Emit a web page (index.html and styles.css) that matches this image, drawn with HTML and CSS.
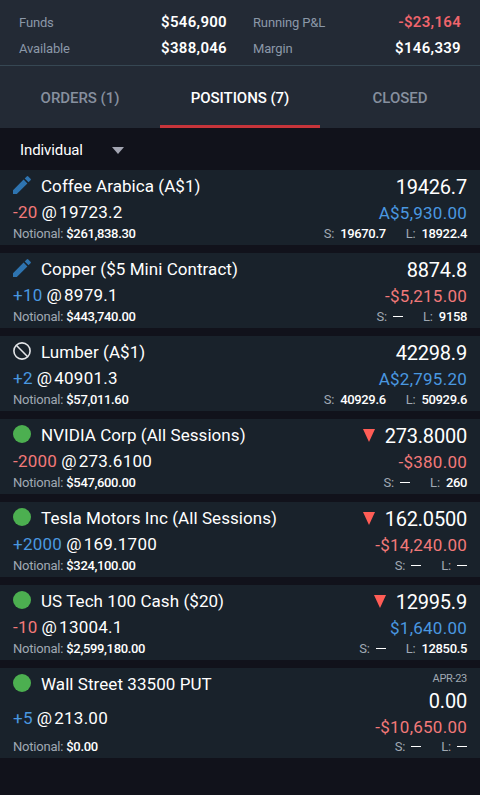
FILE: index.html
```html
<!DOCTYPE html>
<html lang="en">
<head>
    <meta charset="UTF-8">
    <meta name="viewport" content="width=device-width, initial-scale=1.0">
    <title>Positions</title>
    <link rel="stylesheet" href="styles.css">
</head>
<body>
    <!-- Account summary -->
    <header class="summary">
        <div class="summary-col">
            <div class="summary-row"><span>Funds</span><strong>$546,900</strong></div>
            <div class="summary-row"><span>Available</span><strong>$388,046</strong></div>
        </div>
        <div class="summary-col">
            <div class="summary-row"><span>Running P&amp;L</span><strong class="loss">-$23,164</strong></div>
            <div class="summary-row"><span>Margin</span><strong>$146,339</strong></div>
        </div>
    </header>

    <nav class="tabs">
        <a class="tab">ORDERS (1)</a>
        <a class="tab active">POSITIONS (7)</a>
        <a class="tab">CLOSED</a>
    </nav>

    <div class="filter">
        <span>Individual</span>
        <i class="caret"></i>
    </div>

    <!-- Open positions -->
    <main class="positions">
        <div class="card">
            <div class="left">
                <div class="name">
                    <svg class="icon" viewBox="0 0 18 18"><path class="pencil" d="M0 18v-3.8L10.6 3.6l3.8 3.8L3.8 18zM11.7 2.5L13.7.5q.8-.8 1.6 0l2.2 2.2q.8.8 0 1.6l-2 2z"/></svg>
                    <span>Coffee Arabica (A$1)</span>
                </div>
                <div class="qty"><span class="down">-20</span><span class="at">@</span><span>19723.2</span></div>
                <div class="notional">Notional: <b>$261,838.30</b></div>
            </div>
            <div class="right">
                <div class="price">19426.7</div>
                <div class="pnl up">A$5,930.00</div>
                <div class="limits"><span>S: <b>19670.7</b></span><span>L: <b>18922.4</b></span></div>
            </div>
        </div>

        <div class="card">
            <div class="left">
                <div class="name">
                    <svg class="icon" viewBox="0 0 18 18"><path class="pencil" d="M0 18v-3.8L10.6 3.6l3.8 3.8L3.8 18zM11.7 2.5L13.7.5q.8-.8 1.6 0l2.2 2.2q.8.8 0 1.6l-2 2z"/></svg>
                    <span>Copper ($5 Mini Contract)</span>
                </div>
                <div class="qty"><span class="up">+10</span><span class="at">@</span><span>8979.1</span></div>
                <div class="notional">Notional: <b>$443,740.00</b></div>
            </div>
            <div class="right">
                <div class="price">8874.8</div>
                <div class="pnl down">-$5,215.00</div>
                <div class="limits"><span>S: <i class="dash"></i></span><span>L: <b>9158</b></span></div>
            </div>
        </div>

        <div class="card">
            <div class="left">
                <div class="name">
                    <svg class="icon" viewBox="0 0 18 18"><g class="blocked"><circle cx="9" cy="9" r="8.1"/><path d="M3.3 3.3l11.4 11.4"/></g></svg>
                    <span>Lumber (A$1)</span>
                </div>
                <div class="qty"><span class="up">+2</span><span class="at">@</span><span>40901.3</span></div>
                <div class="notional">Notional: <b>$57,011.60</b></div>
            </div>
            <div class="right">
                <div class="price">42298.9</div>
                <div class="pnl up">A$2,795.20</div>
                <div class="limits"><span>S: <b>40929.6</b></span><span>L: <b>50929.6</b></span></div>
            </div>
        </div>

        <div class="card">
            <div class="left">
                <div class="name">
                    <i class="icon live"></i>
                    <span>NVIDIA Corp (All Sessions)</span>
                </div>
                <div class="qty"><span class="down">-2000</span><span class="at">@</span><span>273.6100</span></div>
                <div class="notional">Notional: <b>$547,600.00</b></div>
            </div>
            <div class="right">
                <div class="price"><i class="falling"></i>273.8000</div>
                <div class="pnl down">-$380.00</div>
                <div class="limits"><span>S: <i class="dash"></i></span><span>L: <b>260</b></span></div>
            </div>
        </div>

        <div class="card">
            <div class="left">
                <div class="name">
                    <i class="icon live"></i>
                    <span>Tesla Motors Inc (All Sessions)</span>
                </div>
                <div class="qty"><span class="up">+2000</span><span class="at">@</span><span>169.1700</span></div>
                <div class="notional">Notional: <b>$324,100.00</b></div>
            </div>
            <div class="right">
                <div class="price"><i class="falling"></i>162.0500</div>
                <div class="pnl down">-$14,240.00</div>
                <div class="limits"><span>S: <i class="dash"></i></span><span>L: <i class="dash"></i></span></div>
            </div>
        </div>

        <div class="card">
            <div class="left">
                <div class="name">
                    <i class="icon live"></i>
                    <span>US Tech 100 Cash ($20)</span>
                </div>
                <div class="qty"><span class="down">-10</span><span class="at">@</span><span>13004.1</span></div>
                <div class="notional">Notional: <b>$2,599,180.00</b></div>
            </div>
            <div class="right">
                <div class="price"><i class="falling"></i>12995.9</div>
                <div class="pnl up">$1,640.00</div>
                <div class="limits"><span>S: <i class="dash"></i></span><span>L: <b>12850.5</b></span></div>
            </div>
        </div>

        <div class="card option">
            <div class="left">
                <div class="name">
                    <i class="icon live"></i>
                    <span>Wall Street 33500 PUT</span>
                </div>
                <div class="qty"><span class="up">+5</span><span class="at">@</span><span>213.00</span></div>
                <div class="notional">Notional: <b>$0.00</b></div>
            </div>
            <div class="right">
                <div class="expiry">APR-23</div>
                <div class="price">0.00</div>
                <div class="pnl down">-$10,650.00</div>
                <div class="limits"><span>S: <i class="dash"></i></span><span>L: <i class="dash"></i></span></div>
            </div>
        </div>
    </main>
</body>
</html>
```
FILE: styles.css
```css
body {
    font-family: Roboto, sans-serif;
    margin: 0;
    padding: 0;
    background-color: #11121b;
    color: #fff;
}
/* Summary */
.summary {
    display: flex;
    justify-content: space-between;
    height: 66px;
    box-sizing: border-box;
    padding: 9px 19px 0;
    background-color: #232a35;
    border-bottom: 1px solid #364753;
}
.summary-col {
    width: 208px;
}
.summary-row {
    display: flex;
    justify-content: space-between;
    height: 26px;
    line-height: 27px;
    font-size: 13px;
    letter-spacing: -0.15px;
    color: #8b98a8;
}
.summary-row strong {
    font-size: 15px;
    font-weight: 600;
    letter-spacing: 0.3px;
    line-height: 26px;
    color: #fff;
}
.summary-row .loss {
    color: #f0656c;
}
/* Tabs */
.tabs {
    display: flex;
    height: 62px;
    background-color: #232a35;
}
.tab {
    flex: 1;
    box-sizing: border-box;
    line-height: 65px;
    text-align: center;
    font-size: 15px;
    font-weight: 500;
    letter-spacing: -0.05px;
    color: #87909f;
}
.tab.active {
    color: #fff;
    border-bottom: 3px solid #c7343a;
}
.filter {
    display: flex;
    align-items: center;
    gap: 29px;
    height: 42px;
    box-sizing: border-box;
    padding: 2px 0 0 20px;
    font-size: 15px;
    letter-spacing: -0.1px;
}
.caret {
    border: 6.5px solid transparent;
    border-top: 7px solid #a3a5b2;
    border-bottom: 0;
}
/* Position cards */
.positions {
    display: flex;
    flex-direction: column;
    gap: 8px;
}
.card {
    display: flex;
    justify-content: space-between;
    height: 75px;
    box-sizing: border-box;
    padding: 4px 13px;
    background-color: #19222b;
}
.card.option {
    height: 90px;
}
.left, .right {
    display: flex;
    flex-direction: column;
    justify-content: space-between;
}
.right {
    align-items: flex-end;
}
.name, .qty, .price, .pnl {
    display: flex;
    align-items: center;
    height: 26px;
    font-size: 17px;
    letter-spacing: 0.25px;
    white-space: nowrap;
}
.name, .qty {
    line-height: 24px;
    align-items: flex-start;
}
.name {
    letter-spacing: 0.06px;
}
.icon {
    width: 18px;
    height: 18px;
    margin: 2px 10px 0 0;
}
.pencil {
    fill: #2e74b0;
}
.blocked {
    fill: none;
    stroke: #e3e5e8;
    stroke-width: 1.6;
}
.live {
    border-radius: 50%;
    background-color: #4caf50;
}
.at {
    margin: 0 2px 0 4px;
}
.up {
    color: #4a98e0;
}
.down {
    color: #f27979;
}
.price {
    font-size: 20px;
    letter-spacing: -0.2px;
}
.falling {
    border: 6.5px solid transparent;
    border-top: 13px solid #ff5d56;
    border-bottom: 0;
    margin: 0 10px 2px 0;
}
.notional, .limits {
    height: 15px;
    line-height: 15px;
    font-size: 13px;
    letter-spacing: -0.2px;
    color: #a0a9b3;
}
.notional b, .limits b {
    font-weight: 500;
    letter-spacing: -0.35px;
    color: #fff;
}
.limits {
    display: flex;
    gap: 20px;
}
.limits b, .dash {
    margin-left: 3px;
}
.dash {
    display: inline-block;
    width: 10px;
    height: 1px;
    vertical-align: 4px;
    background-color: #fff;
}
.expiry {
    height: 15px;
    line-height: 14px;
    font-size: 11px;
    letter-spacing: -0.3px;
    color: #a0a9b3;
}
.option .price {
    height: 27px;
}
.option .pnl {
    height: 25px;
}
```
